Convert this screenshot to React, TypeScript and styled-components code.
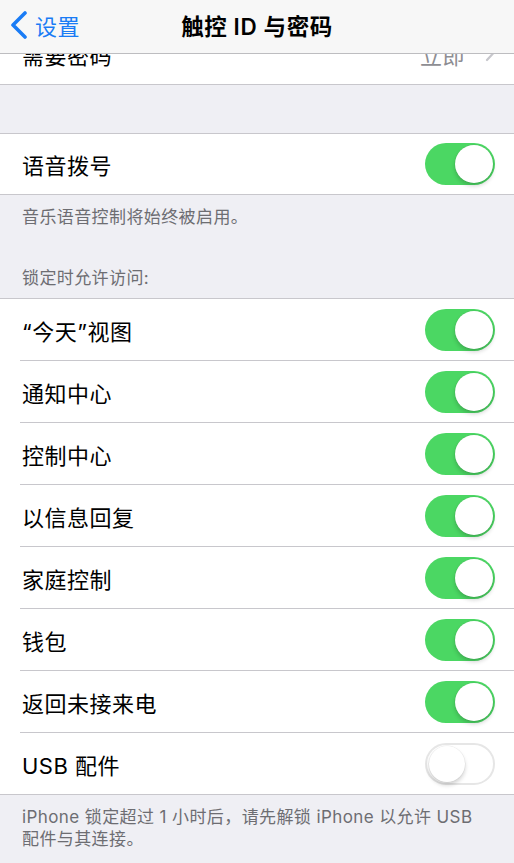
import styled, { createGlobalStyle } from 'styled-components'

const GlobalStyle = createGlobalStyle`
  html, body {
    margin: 0;
    padding: 0;
    background: #efeff4;
  }
  body {
    font-family: Inter, "Noto Sans CJK SC", sans-serif;
    -webkit-font-smoothing: antialiased;
  }
`

const Screen = styled.div`
  width: 514px;
  height: 863px;
  overflow: hidden;
  background: #efeff4;
  display: flex;
  flex-direction: column;
`

const NavBar = styled.div`
  flex-shrink: 0;
  display: grid;
  grid-template-columns: 1fr auto 1fr;
  align-items: center;
  background: #f7f7f7;
  border-bottom: 1px solid #bdbdc0;
  padding-bottom: 4px;
  height: 49px;
`

const BackButton = styled.div`
  display: flex;
  align-items: center;
  gap: 7px;
  padding-left: 10px;
  color: #1a7cf5;
  font-size: 22px;
  letter-spacing: 0.5px;
`

const Title = styled.div`
  font-size: 22.5px;
  font-weight: 600;
  color: #000;
  letter-spacing: 0.6px;
`

const CutRow = styled.div`
  height: 30px;
  flex-shrink: 0;
  overflow: hidden;
  display: flex;
  align-items: flex-end;
  background: #fff;
  border-bottom: 1px solid #c8c7cc;
`

const Group = styled.div`
  background: #fff;
  border-top: 1px solid #c8c7cc;
  border-bottom: 1px solid #c8c7cc;
  flex-shrink: 0;
`

const Gap = styled.div<{ h: number }>`
  height: ${({ h }) => h}px;
  flex-shrink: 0;
`

const Row = styled.div`
  padding-left: 20px;
  width: 100%;
  box-sizing: border-box;
  flex-shrink: 0;

  &:last-child > div {
    border-bottom: none;
  }
`

const RowBody = styled.div<{ h?: number }>`
  height: ${({ h }) => h ?? 61}px;
  display: flex;
  align-items: center;
  justify-content: space-between;
  padding: 0 19px 0 2px;
  border-bottom: 1px solid #c8c7cc;
`

const Label = styled.span`
  font-size: 22px;
  color: #000;
  letter-spacing: 0.5px;
`

const Value = styled.span`
  display: flex;
  align-items: center;
  gap: 20px;
  font-size: 22px;
  color: #8e8e93;
  letter-spacing: 0.5px;
`

const Note = styled.div<{ top: number; bottom: number; right?: number }>`
  padding: ${({ top, bottom, right }) => `${top}px ${right ?? 22}px ${bottom}px 22px`};
  font-size: 17px;
  line-height: 22px;
  color: #6d6d72;
  letter-spacing: 0.4px;
  flex-shrink: 0;
`

const Track = styled.div<{ on: boolean }>`
  width: 70px;
  height: 42px;
  border-radius: 21px;
  box-sizing: border-box;
  display: flex;
  align-items: center;
  justify-content: ${({ on }) => (on ? 'flex-end' : 'flex-start')};
  padding: 2px;
  background: ${({ on }) => (on ? '#4bd763' : '#fff')};
  border: ${({ on }) => (on ? 'none' : '2px solid #e6e6e6')};
`

const Knob = styled.div<{ on: boolean }>`
  width: ${({ on }) => (on ? 38 : 36)}px;
  height: ${({ on }) => (on ? 38 : 36)}px;
  border-radius: 50%;
  background: #fff;
  box-shadow: 0 3px 4px rgba(0, 0, 0, 0.18), 0 0 0 0.5px rgba(0, 0, 0, 0.08);
`

const Toggle = ({ on }: { on: boolean }) => (
  <Track on={on}>
    <Knob on={on} />
  </Track>
)

const lockItems: { label: string; on: boolean }[] = [
  { label: '“今天”视图', on: true },
  { label: '通知中心', on: true },
  { label: '控制中心', on: true },
  { label: '以信息回复', on: true },
  { label: '家庭控制', on: true },
  { label: '钱包', on: true },
  { label: '返回未接来电', on: true },
  { label: 'USB 配件', on: false },
]

export default function App() {
  return (
    <>
      <GlobalStyle />
      <Screen>
        <NavBar>
          <BackButton>
            <svg width="18" height="28" viewBox="0 0 18 28">
              <polyline
                points="15,2 3,14 15,26"
                fill="none"
                stroke="#1a7cf5"
                strokeWidth="3.6"
                strokeLinecap="round"
                strokeLinejoin="round"
              />
            </svg>
            设置
          </BackButton>
          <Title>触控 ID 与密码</Title>
          <div />
        </NavBar>

        <CutRow>
          <Row>
            <RowBody>
              <Label>需要密码</Label>
              <Value>
                立即
                <svg width="10" height="17" viewBox="0 0 10 17">
                  <polyline
                    points="2,2 8,8.5 2,15"
                    fill="none"
                    stroke="#c7c7cc"
                    strokeWidth="2.2"
                    strokeLinecap="round"
                    strokeLinejoin="round"
                  />
                </svg>
              </Value>
            </RowBody>
          </Row>
        </CutRow>

        <Gap h={48} />

        <Group>
          <Row>
            <RowBody h={60}>
              <Label>语音拨号</Label>
              <Toggle on />
            </RowBody>
          </Row>
        </Group>

        <Note top={11} bottom={0}>音乐语音控制将始终被启用。</Note>
        <Note top={39} bottom={9}>锁定时允许访问:</Note>

        <Group>
          {lockItems.map((item) => (
            <Row key={item.label}>
              <RowBody>
                <Label>{item.label}</Label>
                <Toggle on={item.on} />
              </RowBody>
            </Row>
          ))}
        </Group>

        <Note top={11} bottom={0} right={26}>
          iPhone 锁定超过 1 小时后，请先解锁 iPhone 以允许 USB 配件与其连接。
        </Note>
      </Screen>
    </>
  )
}
